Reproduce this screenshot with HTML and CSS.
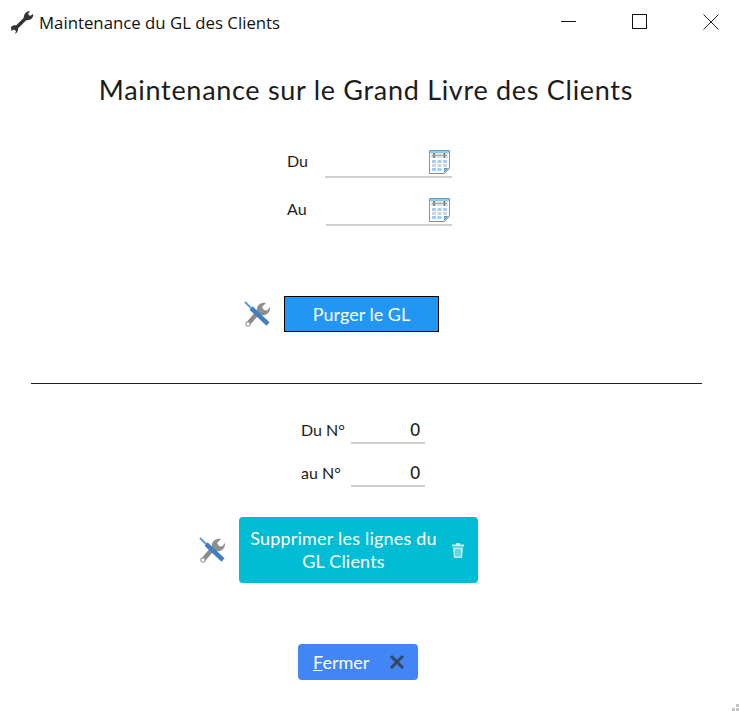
FILE: index.html
```html
<!DOCTYPE html>
<html lang="fr">
<head>
    <meta charset="UTF-8">
    <meta name="viewport" content="width=device-width, initial-scale=1.0">
    <title>Maintenance du GL des Clients</title>
    <link rel="stylesheet" href="styles.css">
</head>
<body>
    <svg class="defs" width="0" height="0">
        <defs>
            <symbol id="tools" viewBox="0 0 26 26">
                <path d="M4 23 L16 9" stroke="#8a8a8a" stroke-width="4.500" fill="none"/>
                <path d="M13 11 C12 5 16 1 22 2 L18 6 L20 9 L23 9.500 L26 6 C26.500 12 22 15.500 16 14 Z" fill="#8f8f8f"/>
                <circle cx="4" cy="23" r="2.200" fill="#fff" stroke="#a0a0a0" stroke-width="1.200"/>
                <path d="M1 1 L7 7" stroke="#5b9bd5" stroke-width="2" fill="none"/>
                <path d="M7 7 L24 23" stroke="#3f80c0" stroke-width="4.500" fill="none"/>
            </symbol>
            <symbol id="calendar" viewBox="0 0 21 24">
                <path d="M0.500 0.500 H20.500 V18.500 L15.500 23.500 H0.500 Z" fill="#fff" stroke="#5a9fd0"/>
                <rect x="1" y="1" width="19" height="2" fill="#85cde8"/>
                <rect x="2" y="3" width="17" height="5" fill="#e2e2e2"/>
                <path d="M5 3 V8 M15.500 3 V8" stroke="#666" stroke-width="1.500"/>
                <path d="M3 5.500 H18" stroke="#a0a0a0"/>
                <g fill="#a9c9f5">
                    <rect x="3" y="10" width="4" height="3"/><rect x="8.500" y="10" width="4" height="3"/><rect x="14" y="10" width="4" height="3"/>
                    <rect x="3" y="18" width="4" height="3"/><rect x="8.500" y="18" width="4" height="3"/>
                </g>
                <g fill="#d4d4d4">
                    <rect x="3" y="14" width="4" height="3"/><rect x="8.500" y="14" width="4" height="3"/><rect x="14" y="14" width="4" height="3"/>
                </g>
                <path d="M20 18 L15 23 V18 Z" fill="#8a9aa8"/>
            </symbol>
        </defs>
    </svg>

    <!-- Title bar -->
    <header class="titlebar">
        <svg class="app-icon" viewBox="0 0 24 24" width="24" height="24">
            <path d="M5 19 L17 7" stroke="#333" stroke-width="3.400" fill="none"/>
            <path d="M14 9 C13 5 16 1 20 1 L18 4 L20 6 L23 4 C24 8 20 11 15 10 Z" fill="#333"/>
            <path d="M1 17 C3 15 6 15 7 16 L8 19 C8 21 7 23 5 24 L6 21 L4 19.500 L1.500 21 Z" fill="#333"/>
        </svg>
        <span class="title-text">Maintenance du GL des Clients</span>
        <div class="win-controls">
            <svg class="win-btn" viewBox="0 0 16 16" width="16" height="16"><path d="M0 7.500 H15" stroke="#111"/></svg>
            <svg class="win-btn" viewBox="0 0 16 16" width="16" height="16"><rect x="0.500" y="0.500" width="14" height="14" fill="none" stroke="#111"/></svg>
            <svg class="win-btn" viewBox="0 0 16 16" width="16" height="16"><path d="M0.500 0.500 L15.500 15.500 M15.500 0.500 L0.500 15.500" stroke="#222"/></svg>
        </div>
    </header>

    <h1 class="main-title">Maintenance sur le Grand Livre des Clients</h1>

    <!-- Dates -->
    <div class="date-group">
        <div class="date-row">
            <label class="date-label">Du</label>
            <div class="date-input">
                <svg class="cal-icon" width="21" height="24"><use href="#calendar"/></svg>
            </div>
        </div>
        <div class="date-row">
            <label class="date-label">Au</label>
            <div class="date-input">
                <svg class="cal-icon" width="21" height="24"><use href="#calendar"/></svg>
            </div>
        </div>
    </div>

    <div class="purge-row">
        <svg class="tool-icon" width="26" height="26"><use href="#tools"/></svg>
        <button class="btn-purge">Purger le GL</button>
    </div>

    <hr class="separator">

    <!-- Numeros -->
    <div class="num-group">
        <div class="num-row">
            <label class="num-label">Du N°</label>
            <div class="num-input">0</div>
        </div>
        <div class="num-row">
            <label class="num-label">au N°</label>
            <div class="num-input">0</div>
        </div>
    </div>

    <div class="delete-row">
        <svg class="tool-icon" width="26" height="26"><use href="#tools"/></svg>
        <button class="btn-delete">
            <span class="delete-text">Supprimer les lignes du GL Clients</span>
            <svg class="trash-icon" viewBox="0 0 14 17" width="14" height="17">
                <path d="M1 2.500 H5 V1 H9 V2.500 H13 V4.500 H1 Z" fill="#c8f0f6"/>
                <path d="M2 5.500 H12 L11 16 H3 Z M4.500 7 V14.500 H5.500 V7 Z M6.500 7 V14.500 H7.500 V7 Z M8.500 7 V14.500 H9.500 V7 Z" fill="#c8f0f6" fill-rule="evenodd"/>
            </svg>
        </button>
    </div>

    <div class="close-row">
        <button class="btn-close">
            <span><u>F</u>ermer</span>
            <svg viewBox="0 0 16 16" width="16" height="16"><path d="M2 2 L14 14 M14 2 L2 14" stroke="#36475f" stroke-width="3"/></svg>
        </button>
    </div>

    <div class="grip"><i></i><i></i><i></i></div>
</body>
</html>
```

FILE: styles.css
```css
/* Page */
html, body {
    height: 100%;
}

body {
    margin: 0;
    background: #fff;
    color: #1c1c1c;
    font-family: "Lato", "Liberation Sans", sans-serif;
    font-size: 16px;
    overflow: hidden;
    position: relative;
}

.defs {
    position: absolute;
}

/* Title bar */
.titlebar {
    display: flex;
    align-items: center;
    height: 44px;
    padding-left: 10px;
}

.app-icon {
    margin-right: 5px;
}

.title-text {
    font-family: "Open Sans", sans-serif;
    font-size: 16.800px;
    color: #111;
}

.win-controls {
    margin-left: auto;
    display: flex;
    gap: 55px;
    padding-right: 20px;
}

/* Heading */
.main-title {
    margin: 27px 0 0;
    padding-right: 7px;
    text-align: center;
    font-size: 27px;
    font-weight: 400;
    line-height: 38px;
    letter-spacing: 0.700px;
}

/* Date rows */
.date-group {
    margin-top: 37px;
}

.date-row {
    display: flex;
    align-items: center;
    height: 32px;
    margin-bottom: 16px;
    padding-left: 287px;
}

.date-label {
    width: 38px;
    padding-bottom: 4px;
}

.date-input {
    width: 127px;
    height: 32px;
    box-sizing: border-box;
    border-bottom: 2px solid #cfcfcf;
    display: flex;
    justify-content: flex-end;
    align-items: center;
    padding: 2px 2px 0 0;
}

.date-row + .date-row .date-label {
    width: 39px;
}

.date-row + .date-row .date-input {
    width: 126px;
}

/* Buttons */
.purge-row {
    display: flex;
    align-items: center;
    gap: 14px;
    margin-top: 70px;
    padding-left: 244px;
}

button {
    font-family: inherit;
    font-size: 18px;
    color: #fff;
    border: none;
    padding: 0;
}

.btn-purge {
    width: 155px;
    height: 36px;
    background: #2196f3;
    border: 1px solid #000;
}

.separator {
    margin: 51px 37px 0 31px;
    border: 0;
    border-top: 1px solid #222;
}

/* Number rows */
.num-group {
    margin-top: 28px;
}

.num-row {
    display: flex;
    align-items: center;
    height: 32px;
    margin-bottom: 11px;
    padding-left: 301px;
}

.num-label {
    width: 50px;
    padding-top: 2px;
}

.num-input {
    width: 74px;
    box-sizing: border-box;
    height: 32px;
    line-height: 36px;
    border-bottom: 2px solid #cfcfcf;
    text-align: right;
    padding-right: 5px;
    font-size: 17px;
    font-weight: 500;
}

.delete-row {
    display: flex;
    align-items: center;
    gap: 14px;
    margin-top: 30px;
    padding-left: 199px;
}

.btn-delete {
    width: 239px;
    height: 66px;
    background: #00bcd4;
    border-radius: 4px;
    display: flex;
    align-items: center;
    padding: 0 13px 0 9px;
}

.delete-text {
    flex: 1;
    line-height: 23px;
    letter-spacing: 0.200px;
}

.trash-icon {
    margin-left: 12px;
}

.close-row {
    margin-top: 61px;
    padding-left: 298px;
}

.btn-close {
    width: 120px;
    height: 36px;
    background: #4285f4;
    border-radius: 4px;
    display: flex;
    align-items: center;
    justify-content: space-between;
    padding: 0 13px 0 15px;
}

/* Resize grip */
.grip {
    position: absolute;
    right: 0;
    bottom: 0;
    display: grid;
    grid-template-columns: 3px 3px;
    grid-template-rows: 3px 3px;
    gap: 1px;
}

.grip i {
    background: #c4c4c4;
}

.grip i:first-child {
    grid-column: 2;
}
```
